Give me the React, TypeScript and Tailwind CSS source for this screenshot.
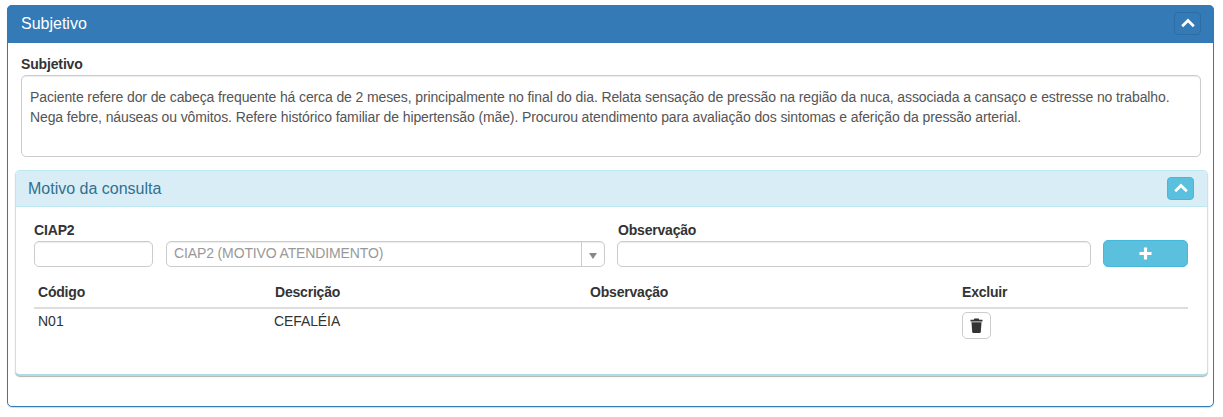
import React from "react";

function ChevronUp({ className }: { className?: string }) {
  return (
    <svg viewBox="0 0 14 10" className={className} fill="none" stroke="currentColor" strokeWidth="2.7">
      <path d="M1.2 8.3 L7 2.5 L12.8 8.3" />
    </svg>
  );
}

function Trash() {
  return (
    <svg viewBox="0 0 12 14" className="w-[13px] h-[15px] text-[#333]" fill="currentColor">
      <path d="M4 0.5 H8 L8.6 1.6 H11.6 V3.2 H0.4 V1.6 H3.4 Z" />
      <path d="M1.3 4 H10.7 L10 13 Q9.9 14 9 14 H3 Q2.1 14 2 13 Z" />
    </svg>
  );
}

const inputCls =
  "block h-[26px] bg-white border border-[#ccc] rounded-[5px] shadow-[inset_0_1px_1px_rgba(0,0,0,0.075)]";

export default function App() {
  return (
    <div className="w-[1223px] h-[417px] bg-white pt-[5px] pl-[7px] font-['Liberation_Sans',Arial,sans-serif] text-[14px] text-[#333]">
      <div className="w-[1207px] h-[402px] border border-[#337ab7] rounded-[5px] shadow-[0_1px_1px_rgba(0,0,0,0.15)] bg-white">
        <div className="h-[38px] -mt-px -mx-px bg-[#337ab7] rounded-t-[5px] flex items-center justify-between pl-[14px] pr-[13px] text-white text-[16px]">
          <span className="leading-[18px]">Subjetivo</span>
          <button className="w-[27px] h-[23px] -mt-[1px] rounded-[4px] border border-[#2e6da4] bg-[#337ab7] flex items-center justify-center text-white">
            <ChevronUp className="w-[14px] h-[10px] -mt-[2px]" />
          </button>
        </div>

        <div className="pl-[13px] pt-[14px]">
          <div className="font-bold text-[14px] leading-[15px] h-[18px] text-[#333] tracking-[-0.15px]">Subjetivo</div>
          <textarea
            readOnly
            className="block w-[1180px] h-[82px] border border-[#ccc] rounded-[5px] px-[8px] pt-[11px] pb-[6px] text-[14px] leading-[20px] tracking-[-0.115px] text-[#555] resize-none outline-none shadow-[inset_0_1px_1px_rgba(0,0,0,0.075)]"
            value="Paciente refere dor de cabeça frequente há cerca de 2 meses, principalmente no final do dia. Relata sensação de pressão na região da nuca, associada a cansaço e estresse no trabalho. Nega febre, náuseas ou vômitos. Refere histórico familiar de hipertensão (mãe). Procurou atendimento para avaliação dos sintomas e aferição da pressão arterial."
          />
        </div>

        <div className="ml-[7px] mt-[13px] w-[1193px] h-[206px] border border-[#bce8f1] border-b-2 border-b-[#aadfe9] rounded-[5px] shadow-[0_1px_1px_rgba(0,0,0,0.3)] bg-white">
          <div className="h-[36px] bg-[#d9edf7] border-b border-[#bce8f1] rounded-t-[4px] flex items-center justify-between pl-[12px] pr-[13px] text-[#31708f] text-[16px]">
            <span className="leading-[18px]">Motivo da consulta</span>
            <button className="w-[27px] h-[23px] rounded-[4px] border border-[#46b8da] bg-[#5bc0de] flex items-center justify-center text-white">
              <ChevronUp className="w-[14px] h-[10px] -mt-[2px]" />
            </button>
          </div>

          <div className="px-[18px] pt-[15px]">
            <div className="flex items-end">
              <div className="w-[119px]">
                <div className="font-bold leading-[17px] h-[19px] tracking-[-0.15px]">CIAP2</div>
                <input className={inputCls + " w-[119px]"} readOnly />
              </div>
              <div className={inputCls + " ml-[13px] w-[439px] flex items-center justify-between text-[#999]"}>
                <span className="pl-[7px] -mt-[2px] tracking-[-0.13px]">CIAP2 (MOTIVO ATENDIMENTO)</span>
                <span className="w-[23px] h-full border-l border-[#ccc] flex items-center justify-center pt-[4px] pr-[1px]">
                  <span className="w-0 h-0 border-x-[4px] border-x-transparent border-t-[6px] border-t-[#888]" />
                </span>
              </div>
              <div className="ml-[12px] w-[474px]">
                <div className="font-bold leading-[17px] h-[19px] pl-[1px] tracking-[-0.2px]">Observação</div>
                <input className={inputCls + " w-[474px]"} readOnly />
              </div>
              <button className="ml-[12px] w-[85px] h-[27px] rounded-[5px] border border-[#46b8da] bg-[#5bc0de] flex items-center justify-center text-white">
                <svg viewBox="0 0 14 14" className="w-[13px] h-[13px]" fill="currentColor">
                  <path d="M5.3 0.5 H8.7 V5.3 H13.5 V8.7 H8.7 V13.5 H5.3 V8.7 H0.5 V5.3 H5.3 Z" />
                </svg>
              </button>
            </div>

            <div className="mt-[17px] w-[1154px] grid grid-cols-[237px_316px_371px_230px] font-bold leading-[16px] pb-[7px] border-b-2 border-[#ddd] tracking-[-0.2px]">
              <div className="pl-[4px]">Código</div>
              <div className="pl-[4px]">Descrição</div>
              <div className="pl-[3px]">Observação</div>
              <div className="pl-[4px]">Excluir</div>
            </div>
            <div className="w-[1154px] grid grid-cols-[237px_316px_371px_230px] pt-[3px]">
              <div className="pl-[4px] leading-[16px] pt-[1px]">N01</div>
              <div className="pl-[3px] leading-[16px] pt-[1px] tracking-[-0.1px]">CEFALÉIA</div>
              <div />
              <div className="pl-[4px]">
                <button className="w-[29px] h-[27px] rounded-[5px] border border-[#ccc] bg-white flex items-center justify-center">
                  <Trash />
                </button>
              </div>
            </div>
          </div>
        </div>
      </div>
    </div>
  );
}
